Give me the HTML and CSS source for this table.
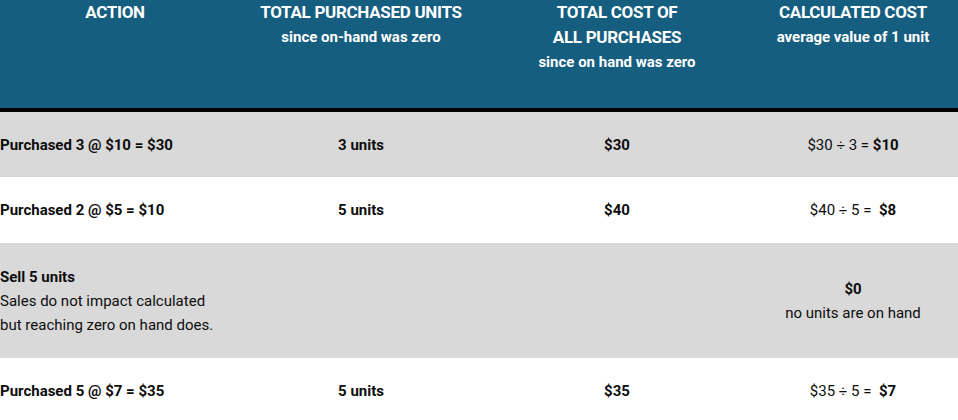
FILE: index.html
```html
<!DOCTYPE html>
<html>
<head>
<meta charset="utf-8">
<link rel="stylesheet" href="styles.css">
</head>
<body>
<div class="table">
  <div class="row head">
    <div class="cell"><div class="h">ACTION</div></div>
    <div class="cell"><div class="h">TOTAL PURCHASED UNITS</div><div class="sub">since on-hand was zero</div></div>
    <div class="cell"><div class="h">TOTAL COST OF</div><div class="h">ALL PURCHASES</div><div class="sub">since on hand was zero</div></div>
    <div class="cell"><div class="h">CALCULATED COST</div><div class="sub">average value of 1 unit</div></div>
  </div>
  <div class="row gray r1">
    <div class="cell left b">Purchased 3 @ $10 = $30</div>
    <div class="cell b">3 units</div>
    <div class="cell b">$30</div>
    <div class="cell"><span>$30 ÷ 3 = <b>$10</b></span></div>
  </div>
  <div class="row r2">
    <div class="cell left b">Purchased 2 @ $5 = $10</div>
    <div class="cell b">5 units</div>
    <div class="cell b">$40</div>
    <div class="cell"><span>$40 ÷ 5 =&nbsp; <b>$8</b></span></div>
  </div>
  <div class="row gray r3">
    <div class="cell left"><div class="b">Sell 5 units</div><div>Sales do not impact calculated</div><div>but reaching zero on hand does.</div></div>
    <div class="cell"></div>
    <div class="cell"></div>
    <div class="cell"><div class="b">$0</div><div>no units are on hand</div></div>
  </div>
  <div class="row r4">
    <div class="cell left b">Purchased 5 @ $7 = $35</div>
    <div class="cell b">5 units</div>
    <div class="cell b">$35</div>
    <div class="cell"><span>$35 ÷ 5 =&nbsp; <b>$7</b></span></div>
  </div>
</div>
</body>
</html>
```
FILE: styles.css
```css
html, body {
  margin: 0;
  padding: 0;
  overflow: hidden;
  background: #ffffff;
}
body {
  font-family: Roboto, "Liberation Sans", sans-serif;
  color: #0d0d0d;
  font-size: 15px;
}
.table {
  width: 964px;
}
.row {
  display: grid;
  grid-template-columns: 230px 262px 250px 222px;
}
.cell {
  display: flex;
  flex-direction: column;
  justify-content: center;
  align-items: center;
  text-align: center;
  line-height: 24px;
  white-space: nowrap;
}
.cell.left {
  align-items: flex-start;
  text-align: left;
}
.head {
  background: #165e80;
  color: #ffffff;
  height: 108px;
  border-bottom: 4px solid #000000;
}
.head .cell {
  justify-content: flex-start;
}
.h {
  font-weight: 700;
  font-size: 17px;
  line-height: 25px;
  letter-spacing: -0.3px;
}
.sub {
  font-weight: 700;
  font-size: 15px;
  line-height: 25px;
}
.b, b {
  font-weight: 700;
}
.gray {
  background: #d9d9d9;
}
.r1 { height: 65px; }
.r2 { height: 66px; }
.r3 { height: 115px; }
.r4 { height: 66px; }
```
